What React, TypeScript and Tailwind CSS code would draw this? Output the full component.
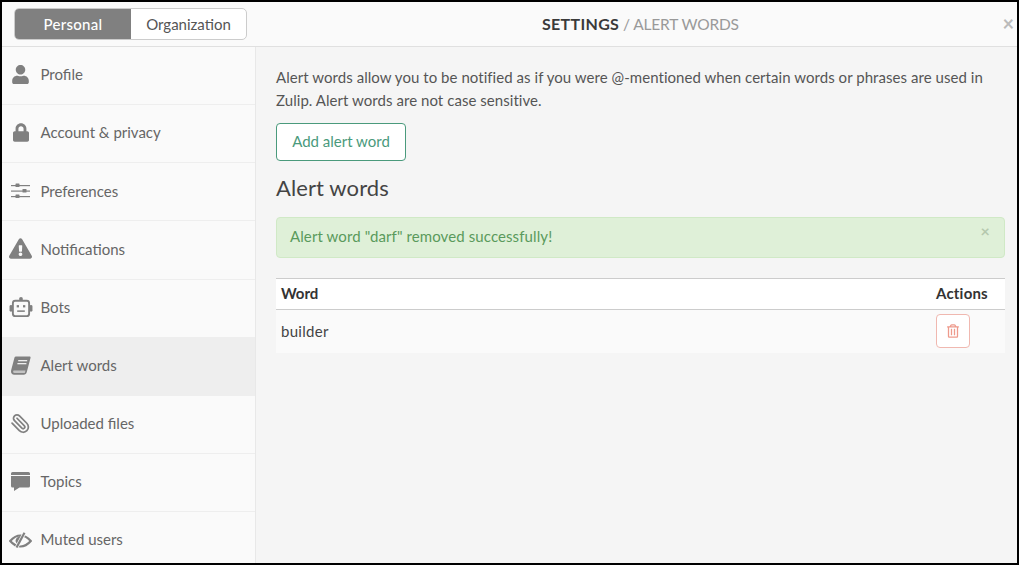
import { FaExclamationTriangle, FaLock, FaRegTrashAlt, FaUser } from "react-icons/fa";
import { Paperclip } from "lucide-react";
import type { ReactNode } from "react";

function BotIcon() {
  return (
    <svg viewBox="0 0 24 22" className="h-[21px] w-[24px]" fill="none">
      <rect x="3.500" y="4" width="17" height="16" rx="2.500" stroke="#808080" strokeWidth="2" />
      <rect x="0" y="8.500" width="3" height="7" rx="1.500" fill="#808080" />
      <rect x="21" y="8.500" width="3" height="7" rx="1.500" fill="#808080" />
      <circle cx="12" cy="2" r="2" fill="#808080" />
      <rect x="7.500" y="8.500" width="2.400" height="2.400" fill="#808080" />
      <rect x="14.100" y="8.500" width="2.400" height="2.400" fill="#808080" />
      <rect x="8" y="14" width="8" height="1.600" fill="#808080" />
    </svg>
  );
}

function TopicIcon() {
  return (
    <svg viewBox="0 0 19 19" className="h-[19px] w-[19px]">
      <path
        d="M1.500 0h16A1.500 1.500 0 0 1 19 1.500V14a1.500 1.500 0 0 1-1.500 1.500H8.500L3 19v-3.500H1.500A1.500 1.500 0 0 1 0 14V1.500A1.500 1.500 0 0 1 1.500 0z"
        fill="#808080"
      />
      <rect x="0" y="3" width="19" height="1" fill="#fafafa" />
    </svg>
  );
}

function SlidersIcon() {
  return (
    <svg viewBox="0 0 19 16" className="h-[16px] w-[19px]" fill="#808080">
      <rect x="0" y="2" width="19" height="1.200" />
      <rect x="0" y="7.500" width="19" height="1.200" />
      <rect x="0" y="13" width="19" height="1.200" />
      <rect x="4.500" y="0.500" width="4" height="3.600" rx="0.600" />
      <rect x="11.500" y="6" width="4" height="3.600" rx="0.600" />
      <rect x="4.500" y="11.500" width="4" height="3.600" rx="0.600" />
    </svg>
  );
}

function BookIcon() {
  return (
    <svg viewBox="0 0 20 19" className="h-[19px] w-[20px]">
      <path
        d="M5 0.500h13.500c.9 0 1.300.6 1 1.400L15.800 16c-.5 1.800-1.500 2.700-3 2.700H3.200C1.200 18.700 0 17.400 0 15.500c0-.5.100-1 .2-1.500L3.500 1.600C3.700.9 4.200.5 5 .5z"
        fill="#808080"
      />
      <path d="M2.800 14.600h11.700l-.7 2.300H3.400c-1 0-1.400-.5-1.300-1.200.1-.6.300-1.100.7-1.100z" fill="#fafafa" opacity="0.55" />
      <rect x="7.200" y="4" width="9" height="1.300" fill="#eeeeee" />
      <rect x="6.400" y="7" width="9" height="1.300" fill="#eeeeee" />
    </svg>
  );
}

function EyeSlashIcon() {
  return (
    <svg viewBox="0 0 23 16" className="h-[16px] w-[23px]" fill="none">
      <path d="M1.200 9 Q6 3.500 11.500 3.500 Q17 3.500 21.800 9 Q17 14.500 11.500 14.500 Q6 14.500 1.200 9z" stroke="#808080" strokeWidth="2.200" />
      <path d="M6.500 9a5 5 0 0 1 7-4.500L9 12.500A5 5 0 0 1 6.500 9z" fill="#808080" />
      <path d="M7.500 15.500 L15.500 0.800" stroke="#fafafa" strokeWidth="3.600" />
      <path d="M7.500 15.500 L15.500 0.800" stroke="#808080" strokeWidth="2.200" />
    </svg>
  );
}

const ITEMS: { label: string; icon: ReactNode; active?: boolean }[] = [
  { label: "Profile", icon: <FaUser className="h-[19px] w-[17px]" /> },
  { label: "Account & privacy", icon: <FaLock className="h-[19px] w-[16px]" /> },
  { label: "Preferences", icon: <SlidersIcon /> },
  { label: "Notifications", icon: <FaExclamationTriangle className="h-[21px] w-[23px]" /> },
  { label: "Bots", icon: <BotIcon /> },
  { label: "Alert words", icon: <BookIcon />, active: true },
  { label: "Uploaded files", icon: <Paperclip className="h-[21px] w-[21px] -scale-x-100" strokeWidth={2} /> },
  { label: "Topics", icon: <TopicIcon /> },
  { label: "Muted users", icon: <EyeSlashIcon /> },
];

export default function App() {
  return (
    <div className="flex h-[565px] w-[1019px] flex-col overflow-hidden border-2 border-black bg-[#f5f5f5] font-['Lato',sans-serif] text-[15px] text-[#555]">
      <header className="relative flex h-[45px] shrink-0 items-center border-b border-[#e0e0e0] bg-[#fafafa]">
        <div className="ml-3 flex h-[32px] w-[233px] overflow-hidden rounded-[5px] border border-[#ccc] bg-white">
          <div className="flex w-[116px] items-center justify-center bg-[#808080] font-medium tracking-[0.02em] text-white">Personal</div>
          <div className="flex flex-1 items-center justify-center text-[#555]">Organization</div>
        </div>
        <h1 className="ml-[295px] text-[16px] uppercase">
          <span className="font-bold tracking-[0.02em] text-[#3a3a3a]">Settings</span>
          <span className="text-[15.500px] tracking-[-0.01em] text-[#999]"> / Alert words</span>
        </h1>
        <span className="absolute right-[3px] top-[11px] text-[20px] font-bold leading-none text-[#bbb]">×</span>
      </header>

      <div className="flex min-h-0 flex-1">
        <nav className="w-[254px] shrink-0 overflow-hidden border-r border-[#e8e8e8] bg-[#fafafa]">
          {ITEMS.map((item) => (
            <div
              key={item.label}
              className={`flex h-[58.14px] items-center border-b border-[#eee] pb-[2px] text-[#666] ${item.active ? "bg-[#eeeeee]" : ""}`}
            >
              <span className="mr-[1.5px] flex w-[37px] shrink-0 items-center justify-center text-[#808080]">{item.icon}</span>
              <span>{item.label}</span>
            </div>
          ))}
        </nav>

        <main className="min-w-0 flex-1 pl-5 pr-[12px] pt-[19px]">
          <p className="leading-[23px] tracking-[0.05px]">
            Alert words allow you to be notified as if you were @-mentioned when certain words or phrases are used in Zulip. Alert words are not case sensitive.
          </p>
          <button type="button" className="mt-[11px] block h-[38px] w-[130px] rounded-[4px] border border-[#4a9a7c] bg-white pb-[2px] text-center text-[#4a9a7c]">
            Add alert word
          </button>
          <h2 className="mt-[13px] text-[22px] leading-[28px] tracking-[0.1px] text-[#444]">Alert words</h2>
          <div className="relative mt-[15px] flex h-[41px] items-center rounded-[4px] border border-[#d0e9c6] bg-[#dff0d8] pb-[2px] pl-[13px] tracking-[0.1px] text-[#5a9a5c]">
            Alert word "darf" removed successfully!
            <span className="absolute right-[14px] top-[5px] text-[16px] font-bold leading-none text-[#b5c8ae]">×</span>
          </div>
          <table className="mt-[20px] w-full border-collapse">
            <thead>
              <tr className="h-[31px] border-y border-[#ccc] bg-white text-left font-bold text-[#333]">
                <th className="pb-[1px] pl-[5px]">Word</th>
                <th className="w-[69px] pb-[1px] tracking-[0.2px]">Actions</th>
              </tr>
            </thead>
            <tbody>
              <tr className="h-[43px] bg-[#fafafa]">
                <td className="pl-[5px] tracking-[0.3px] text-[#444]">builder</td>
                <td>
                  <span className="flex h-[34px] w-[34px] items-center justify-center rounded-[4px] border border-[#f0b8b0] bg-white text-[#ee9a8c]">
                    <FaRegTrashAlt className="h-[14px] w-[12px]" />
                  </span>
                </td>
              </tr>
            </tbody>
          </table>
        </main>
      </div>
    </div>
  );
}
